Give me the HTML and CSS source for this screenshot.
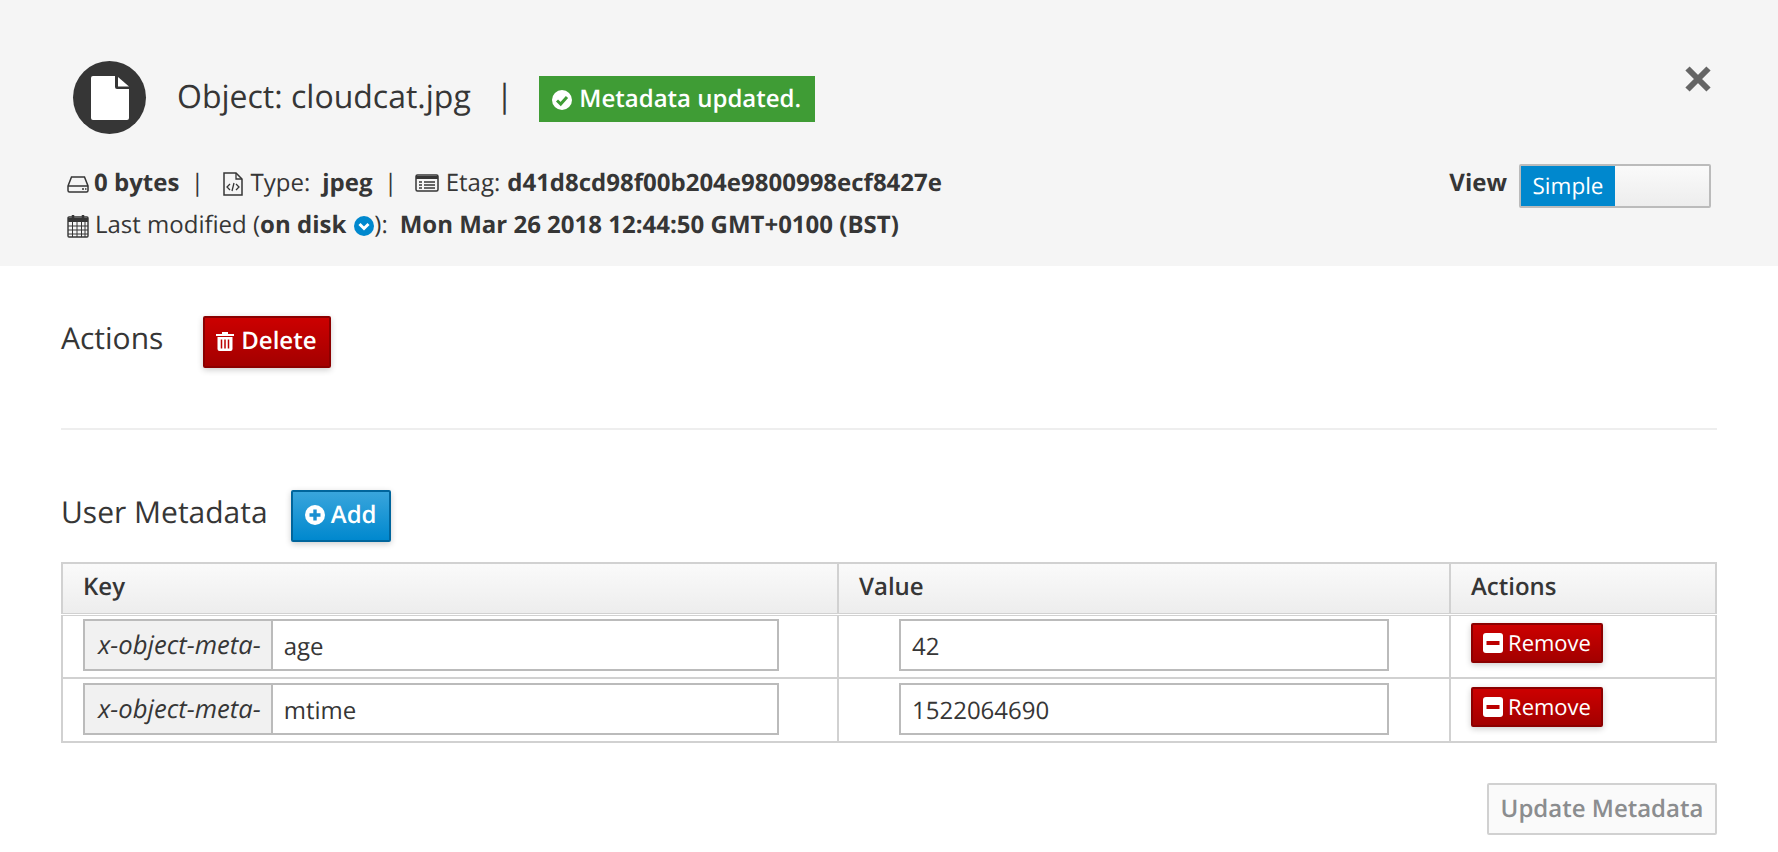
FILE: index.html
```html
<!DOCTYPE html>
<html lang="en">
<head>
<meta charset="utf-8">
<title>Object: cloudcat.jpg</title>
<link rel="stylesheet" href="styles.css">
</head>
<body>
<header class="head">
  <button class="close" aria-label="Close">
    <svg viewBox="0 0 26 26" width="26" height="26"><path d="M2.500 2.500 23.500 23.500M23.500 2.500 2.500 23.500" stroke="#656565" stroke-width="6" fill="none"/></svg>
  </button>
  <div class="title-row">
    <span class="avatar">
      <svg viewBox="0 0 38 44" width="38" height="44"><path d="M2 0h22v11a2 2 0 0 0 2 2h12v29a2 2 0 0 1-2 2H2a2 2 0 0 1-2-2V2a2 2 0 0 1 2-2Z" fill="#fff"/><path d="M27 1l11 9.500H27Z" fill="#fff"/></svg>
    </span>
    <h1 class="title">Object: cloudcat.jpg</h1>
    <span class="pipe-title">|</span>
    <span class="badge">
      <svg class="ico-badge" viewBox="0 0 20 20" width="20" height="20"><circle cx="10" cy="10" r="10" fill="#fff"/><path d="M5 10.500 8.700 14 15 7" stroke="#3f9c35" stroke-width="3" fill="none"/></svg>
      Metadata updated.
    </span>
  </div>
  <div class="meta-row">
    <div class="meta">
      <div class="meta-line">
        <svg class="ico" viewBox="0 0 22 22" width="22" height="22"><path d="M1 13 4.500 4h13L21 13v4.500a1.500 1.500 0 0 1-1.500 1.500h-17A1.500 1.500 0 0 1 1 17.500ZM1 13h20" stroke="#363636" stroke-width="1.500" fill="none"/><path d="M15 16h2M18 16h1.500" stroke="#363636" stroke-width="1.500"/></svg>
        <b>0 bytes</b><span class="pipe">|</span>
        <svg class="ico ico-file" viewBox="0 0 22 24" width="22" height="24"><path d="M2 1h12l6 6v16H2Z" stroke="#363636" stroke-width="1.500" fill="none"/><path d="M14 1v6h6M8 12l-3 3 3 3M14 12l3 3-3 3M12 11l-2 8" stroke="#363636" stroke-width="1.300" fill="none"/></svg>
        <span class="txt">Type:</span><b class="val">jpeg</b><span class="pipe">|</span>
        <svg class="ico ico-file" viewBox="0 0 24 20" width="24" height="20"><rect x="1" y="1" width="22" height="16" rx="1.500" stroke="#363636" stroke-width="1.500" fill="none"/><path d="M1 2h22v3H1Z" fill="#363636"/><path d="M4 8h3M9 8h11M4 11h3M9 11h11M4 14h3M9 14h11" stroke="#363636" stroke-width="1.500"/></svg>
        <span class="txt">Etag:</span><b>d41d8cd98f00b204e9800998ecf8427e</b>
      </div>
      <div class="meta-line">
        <svg class="ico ico-cal" viewBox="0 0 22 24" width="22" height="24"><path d="M2 3h18a1 1 0 0 1 1 1v18a1 1 0 0 1-1 1H2a1 1 0 0 1-1-1V4a1 1 0 0 1 1-1Z" stroke="#363636" stroke-width="1.400" fill="none"/><path d="M1 4h20v4H1Z" fill="#363636"/><path d="M1 12h20M1 16h20M1 20h20M5.500 8v15M10 8v15M14.500 8v15M18 8v15" stroke="#363636" stroke-width="1"/><path d="M6 1v5M16 1v5" stroke="#363636" stroke-width="2.500"/></svg>
        <span class="plain">Last modified (<b>on disk</b></span>
        <svg class="ico-info" viewBox="0 0 20 20" width="20" height="20"><circle cx="10" cy="10" r="10" fill="#0088ce"/><path d="M5.500 8 10 12.500 14.500 8" stroke="#fff" stroke-width="3" fill="none"/></svg>
        <span class="plain">):</span><b class="val-date">Mon Mar 26 2018 12:44:50 GMT+0100 (BST)</b>
      </div>
    </div>
    <div class="view">
      <b class="view-label">View</b>
      <span class="toggle"><span class="toggle-on">Simple</span><span class="toggle-off"></span></span>
    </div>
  </div>
</header>
<main class="main">
  <section class="section-row">
    <h2 class="section-title">Actions</h2>
    <button class="btn btn-danger btn-delete">
      <svg viewBox="0 0 18 20" width="18" height="20"><path d="M6 3V1h6v2h6v2H0V3Z M1.500 6h15v12a2 2 0 0 1-2 2h-11a2 2 0 0 1-2-2Z" fill="#fff"/><path d="M5.500 8.500v9M9 8.500v9M12.500 8.500v9" stroke="#b00" stroke-width="1.500"/></svg>
      Delete
    </button>
  </section>
  <hr class="rule">
  <section class="section-row section-meta">
    <h2 class="section-title">User Metadata</h2>
    <button class="btn btn-primary btn-add">
      <svg viewBox="0 0 20 20" width="20" height="20"><circle cx="10" cy="10" r="10" fill="#fff"/><path d="M10 4.500v11M4.500 10h11" stroke="#1a8fd1" stroke-width="3.400"/></svg>
      Add
    </button>
  </section>
  <table class="table">
    <colgroup><col class="col-key"><col class="col-value"><col class="col-actions"></colgroup>
    <thead><tr><th>Key</th><th>Value</th><th>Actions</th></tr></thead>
    <tbody>
      <tr>
        <td><div class="group"><span class="addon">x-object-meta-</span><span class="field">age</span></div></td>
        <td><div class="field value-field">42</div></td>
        <td><button class="btn btn-danger btn-remove"><svg viewBox="0 0 20 20" width="20" height="20"><path d="M3 0h14a3 3 0 0 1 3 3v14a3 3 0 0 1-3 3H3a3 3 0 0 1-3-3V3a3 3 0 0 1 3-3Z" fill="#fff"/><path d="M3.500 10h13" stroke="#b00" stroke-width="4"/></svg>Remove</button></td>
      </tr>
      <tr>
        <td><div class="group"><span class="addon">x-object-meta-</span><span class="field">mtime</span></div></td>
        <td><div class="field value-field">1522064690</div></td>
        <td><button class="btn btn-danger btn-remove"><svg viewBox="0 0 20 20" width="20" height="20"><path d="M3 0h14a3 3 0 0 1 3 3v14a3 3 0 0 1-3 3H3a3 3 0 0 1-3-3V3a3 3 0 0 1 3-3Z" fill="#fff"/><path d="M3.500 10h13" stroke="#b00" stroke-width="4"/></svg>Remove</button></td>
      </tr>
    </tbody>
  </table>
  <div class="foot"><button class="btn-update" disabled>Update Metadata</button></div>
</main>
</body>
</html>
```
FILE: styles.css
```css
* { box-sizing: border-box; }
html, body { margin: 0; height: 100%; overflow: hidden; }
body { background: #fff; color: #363636; font: 24px/1.4 "Open Sans", sans-serif; text-rendering: geometricPrecision; }
b { font-weight: 700; }
button { font-family: inherit; text-rendering: inherit; }

.head { position: relative; height: 266px; background: #f5f5f5; padding: 61px 67px 0; }
.close { position: absolute; top: 66px; right: 67px; width: 26px; height: 26px; padding: 0; border: 0; background: none; }
.close svg { display: block; }
.title-row { display: flex; align-items: center; height: 73px; margin-left: 6px; }
.avatar { display: flex; align-items: center; justify-content: center; width: 73px; height: 73px; border-radius: 50%; background: #363636; flex: none; }
.title { margin: 0 0 1px 31px; font-size: 32px; font-weight: 400; line-height: 46px; }
.pipe-title { margin-left: 25px; font-size: 32px; font-weight: 400; padding-bottom: 2px; }
.badge { display: flex; align-items: center; gap: 7px; width: 276px; height: 46px; margin: 3px 0 0 26px; padding: 0 0 0 13px; background: #3f9c35; color: #fff; font-size: 24px; font-weight: 600; white-space: nowrap; }
.ico-badge { margin-top: 1px; }

.meta-row { display: flex; justify-content: space-between; margin-top: 28px; }
.meta-line { display: flex; align-items: center; height: 42px; white-space: nowrap; }
.ico { flex: none; margin-right: 5px; margin-top: 2px; }
.ico-file { margin-right: 7px; }
.ico-cal { margin-right: 6px; }
.ico-info { flex: none; margin-top: 2px; margin-left: 3px; }
.pipe { margin: 0 17.500px 0 11.500px; font-weight: 400; }
.txt { margin-right: 7px; }
.plain { margin-right: 5px; }
.val { margin-left: 5px; }
.val-date { margin-left: 7px; }
.view { display: flex; align-items: center; height: 44px; margin-top: 2px; }
.view-label { margin: 0 12px 6px 0; }
.toggle { display: flex; width: 192px; height: 44px; border: 2px solid #bbb; border-radius: 2px; }
.toggle-on { display: flex; align-items: center; justify-content: center; width: 94px; padding-bottom: 1px; background: #0088ce; color: #fff; font-size: 22.500px; }
.toggle-off { flex: 1; background: linear-gradient(#fafafa, #ededed); }

.main { padding: 50px 61px 0; }
.section-row { display: flex; align-items: center; height: 52px; }
.section-title { margin: 0 0 9px; font-size: 30px; font-weight: 400; line-height: 40px; }
.btn { display: inline-flex; align-items: center; justify-content: center; padding: 0 0 3px; border: 2px solid; border-radius: 2px; color: #fff; font-size: 24px; font-weight: 600; box-shadow: 0 2px 6px rgba(0,0,0,.2); white-space: nowrap; }
.btn svg { margin-top: 1px; }
.btn-danger { border-color: #8b0000; background: linear-gradient(#c00, #a30000); }
.btn-primary { border-color: #00659c; background: linear-gradient(#39a5dc, #0088ce); }
.btn-delete { width: 128px; height: 52px; margin-left: 40px; padding-right: 2px; gap: 7px; }
.rule { margin: 60px 0 0; border: 0; border-top: 2px solid #eee; height: 0; }
.section-meta { margin-top: 60px; }
.btn-add { width: 100px; height: 52px; margin-left: 23px; gap: 6px; }

.table { width: 1656px; margin-top: 20px; border-collapse: collapse; table-layout: fixed; }
.col-key { width: 776px; }
.col-value { width: 612px; }
.table th, .table td { border: 2px solid #d1d1d1; padding: 0 20px; text-align: left; }
.table th { height: 51px; padding-bottom: 2px; background: linear-gradient(#fafafa, #ededed); font-size: 24px; font-weight: 600; }
.table td { height: 64px; padding-top: 4px; vertical-align: top; }
.table tbody tr:first-child td { padding-top: 3px; border-top: 3px double #d1d1d1; }
.group { display: flex; width: 696px; height: 52px; }
.addon { display: flex; align-items: center; padding: 0 10px 0 13px; border: 2px solid #bbb; background: #f1f1f1; font-size: 25.600px; font-style: italic; white-space: nowrap; }
.field { display: flex; align-items: center; flex: 1; height: 52px; padding: 4px 11px 0; border: 2px solid #bbb; border-left: 0; background: #fff; }
.value-field { width: 490px; margin-left: 40px; border-left: 2px solid #bbb; }
.btn-remove { width: 132px; height: 40px; margin-top: 4px; gap: 5px; padding-bottom: 0; font-size: 22px; font-weight: 500; }
.btn-remove svg { margin-top: 0; }
.foot { display: flex; justify-content: flex-end; margin-top: 40px; }
.btn-update { width: 230px; height: 52px; padding: 0 0 2px; border: 2px solid #d1d1d1; border-radius: 2px; background: #fafafa; color: #8b8d8f; font-size: 24px; font-weight: 600; }
```
